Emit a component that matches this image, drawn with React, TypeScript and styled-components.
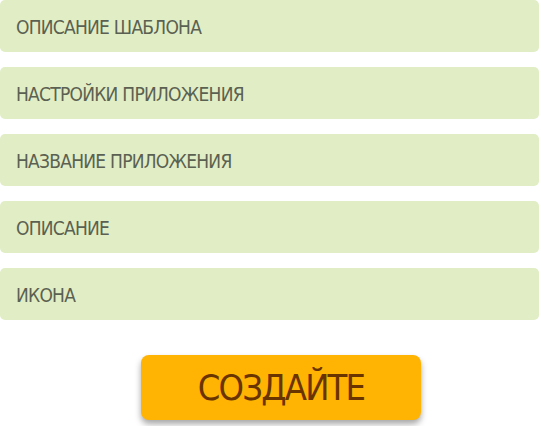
import styled, { createGlobalStyle } from 'styled-components'

const Global = createGlobalStyle`
	html, body {
		margin: 0;
		padding: 0;
		background: #ffffff;
	}
	body {
		font-family: 'DejaVu Sans Condensed', 'DejaVu Sans', sans-serif;
		font-stretch: condensed;
	}
`

const fields = [
	'ОПИСАНИЕ ШАБЛОНА',
	'НАСТРОЙКИ ПРИЛОЖЕНИЯ',
	'НАЗВАНИЕ ПРИЛОЖЕНИЯ',
	'ОПИСАНИЕ',
	'ИКОНА'
]

export default function App() {
	return (
		<>
			<Global />
			<Page>
				<FieldList>
					{fields.map((f) => (
						<Field key={f}>{f}</Field>
					))}
				</FieldList>
				<Actions>
					<CreateButton>СОЗДАЙТЕ</CreateButton>
				</Actions>
			</Page>
		</>
	)
}

const Page = styled.div`
	width: 541px;
	height: 426px;
	box-sizing: border-box;
	padding-right: 2px;
	display: flex;
	flex-direction: column;
	overflow: hidden;
`

const FieldList = styled.div`
	display: flex;
	flex-direction: column;
	gap: 15px;
`

const Field = styled.div`
	height: 52px;
	box-sizing: border-box;
	padding: 1px 16px 0;
	display: flex;
	align-items: center;
	background: #e1eec5;
	border-radius: 5px;
	color: #5b6152;
	font-size: 19px;
	letter-spacing: -0.75px;
`

const Actions = styled.div`
	display: flex;
	justify-content: center;
	padding: 35px 0 0 23px;
`

const CreateButton = styled.button`
	width: 280px;
	height: 65px;
	border: none;
	border-radius: 8px;
	background: #ffb302;
	color: #6a3400;
	font-family: inherit;
	font-stretch: condensed;
	font-size: 36px;
	letter-spacing: -1.8px;
	box-shadow: 0 4px 6px rgba(0, 0, 0, 0.35);
	cursor: pointer;
`
